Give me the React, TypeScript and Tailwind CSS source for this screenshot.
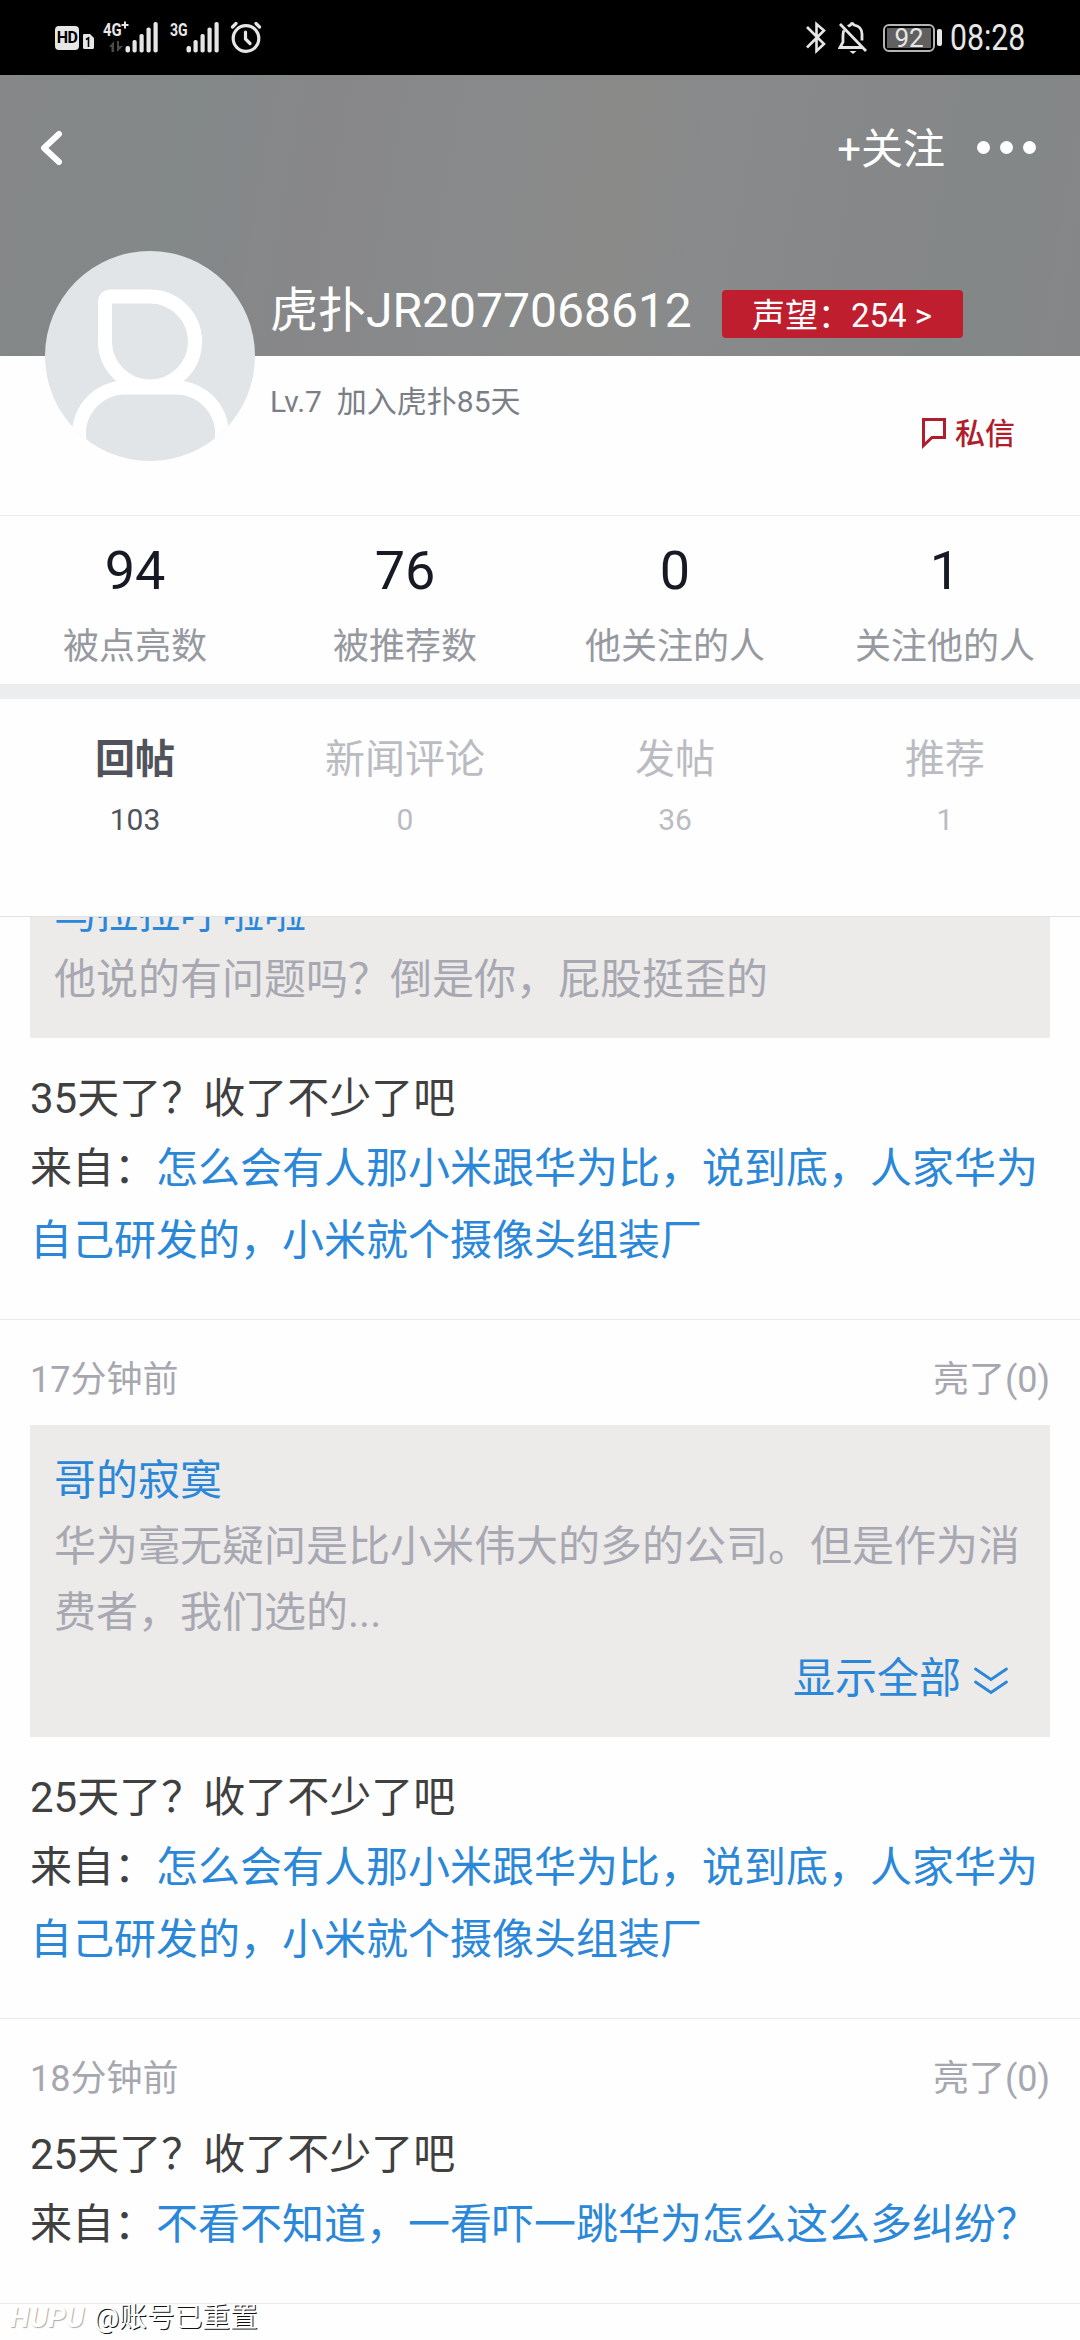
import React from 'react';

interface Reply {
  time?: string;
  likes?: string;
  quote?: { author: string; lines: string[]; expandable?: boolean };
  text: string;
  source: string[];
}

const stats = [
  { value: '94', label: '被点亮数' },
  { value: '76', label: '被推荐数' },
  { value: '0', label: '他关注的人' },
  { value: '1', label: '关注他的人' },
];

const tabs = [
  { name: '回帖', count: '103', active: true },
  { name: '新闻评论', count: '0' },
  { name: '发帖', count: '36' },
  { name: '推荐', count: '1' },
];

const replies: Reply[] = [
  {
    quote: { author: '乌拉拉呼啦啦', lines: ['他说的有问题吗？倒是你，屁股挺歪的'] },
    text: '35天了？收了不少了吧',
    source: ['怎么会有人那小米跟华为比，说到底，人家华为', '自己研发的，小米就个摄像头组装厂'],
  },
  {
    time: '17分钟前',
    likes: '亮了(0)',
    quote: {
      author: '哥的寂寞',
      lines: ['华为毫无疑问是比小米伟大的多的公司。但是作为消', '费者，我们选的...'],
      expandable: true,
    },
    text: '25天了？收了不少了吧',
    source: ['怎么会有人那小米跟华为比，说到底，人家华为', '自己研发的，小米就个摄像头组装厂'],
  },
  {
    time: '18分钟前',
    likes: '亮了(0)',
    text: '25天了？收了不少了吧',
    source: ['不看不知道，一看吓一跳华为怎么这么多纠纷？'],
  },
];

const Signal = () => (
  <svg width="34" height="34" viewBox="0 0 34 34" fill="#e6e6e6">
    <rect x="0.5" y="25" width="4.5" height="6.5" rx="2" />
    <rect x="7.5" y="19" width="4.2" height="12.5" rx="1.8" />
    <rect x="14.5" y="13" width="4.2" height="18.5" rx="1.8" />
    <rect x="21.5" y="6.5" width="4.2" height="25" rx="1.8" />
    <rect x="28.5" y="1" width="4.2" height="30.5" rx="1.8" />
  </svg>
);

const StatusBar = () => (
  <div className="flex h-[75px] items-start bg-black text-[#e6e6e6]">
    <div className="ml-[55px] mt-[26px] flex h-6 w-6 items-center justify-center rounded-[4px] bg-[#e6e6e6] text-[16px] font-bold leading-6 tracking-[-0.5px] text-black">HD</div>
    <svg className="ml-1 mt-[34px]" width="11" height="15" viewBox="0 0 11 15">
      <path d="M1 0h6l4 4v9.500q0 1.500-1.500 1.500h-8q-1.500 0-1.500-1.500v-12.500q0-1 1-1z" fill="#e6e6e6" />
      <path d="M3 5.500l2.500-1.500v9" fill="none" stroke="#000" strokeWidth="1.600" />
    </svg>
    <div className="relative ml-[9px] mt-[21px] h-9 w-[22px]">
      <span className="absolute left-0 top-0 origin-left scale-x-[0.78] text-[19px] font-bold leading-[18px]">4G</span>
      <svg className="absolute left-[18px] top-0" width="8" height="8" viewBox="0 0 8 8" fill="none" stroke="#e6e6e6" strokeWidth="2">
        <path d="M4 0.500v7M0.500 4h7" />
      </svg>
      <svg className="absolute left-[6px] top-[20px]" width="14" height="12" viewBox="0 0 14 12" fill="#4a4a4a">
        <path d="M5 0v11H2.500V6H0zM8 0h2v5h4l-6 6z" />
      </svg>
    </div>
    <div className="mt-[21px]"><Signal /></div>
    <span className="ml-[11px] mt-[21px] w-[17px] origin-left scale-x-[0.74] text-[19px] font-bold leading-[18px]">3G</span>
    <div className="-ml-px mt-[21px]"><Signal /></div>
    <svg className="ml-[10px] mt-[21px]" width="32" height="33" viewBox="0 0 32 33" fill="none" stroke="#e6e6e6" strokeWidth="3.200" strokeLinecap="round">
      <circle cx="16" cy="17.500" r="12.800" />
      <path d="M15.500 11v7l4.500 4.500M2.500 6l3.500-3.500M29.500 6L26 2.500" />
    </svg>
    <svg className="ml-auto mt-[21px]" width="20" height="33" viewBox="0 0 20 33" fill="none" stroke="#e6e6e6" strokeWidth="2.600">
      <path d="M1 6l17 17-7.500 7V3L18 9.500 1 26.500" />
    </svg>
    <svg className="ml-3 mt-[21px]" width="30" height="33" viewBox="0 0 30 33" fill="none" stroke="#e6e6e6" strokeWidth="2.800">
      <path d="M2 3l26 27M6 9.500C4.500 12 5 16 5 21l-3 5.500h22M10 5.500C11 4.500 12 4.500 12.500 4q1.500-3 3.500 0c5 1 8 4 8 9v6.500" />
      <path d="M11.500 30h7l-3.500 3z" fill="#e6e6e6" stroke="none" />
    </svg>
    <div className="ml-[15px] mt-6 flex h-7 w-[52px] items-center justify-center rounded-[6px] border-2 border-[#b5b5b5] bg-black p-[2px]">
      <span className="flex h-full w-full items-center justify-center bg-[#606060] text-[26px] leading-5 text-[#e6e6e6]">92</span>
    </div>
    <div className="ml-[2px] mt-[29px] h-[17px] w-[5px] rounded-[2px] bg-[#e6e6e6]" />
    <span className="ml-2 mr-[54px] mt-[20px] w-[76px] origin-left scale-x-[0.84] whitespace-nowrap text-[36px] leading-9">08:28</span>
  </div>
);

const Avatar = () => (
  <svg className="absolute left-[45px] top-[176px]" width="210" height="210" viewBox="0 0 210 210">
    <defs>
      <clipPath id="face"><circle cx="105" cy="105" r="105" /></clipPath>
    </defs>
    <circle cx="105" cy="105" r="105" fill="#e1e5e8" />
    <g clipPath="url(#face)" fill="none" stroke="#fff" strokeWidth="14">
      <path d="M66 45.500h39.500a45 45 0 1 1-45.500 45V51.500q0-6 6-6z" />
      <path d="M34.500 200v-10a46.500 46.500 0 0 1 46.500-53.500h49a46.500 46.500 0 0 1 46.500 53.500v10" />
    </g>
  </svg>
);

const Header = () => (
  <div className="relative h-[440px]">
    <div className="flex h-[281px] flex-col bg-[linear-gradient(100deg,#858788_0%,#838889_18%,#878789_30%,#888a8b_45%,#8a8a88_56%,#888a8b_64%,#868788_78%,#838788_90%,#858687_100%)] text-white">
      <div className="flex h-[145px] items-center">
        <svg className="ml-[39px]" width="24" height="36" viewBox="0 0 24 36" fill="none" stroke="#fff" strokeWidth="6" strokeLinecap="round" strokeLinejoin="round">
          <path d="M20 4L5 18l15 14" />
        </svg>
        <span className="ml-auto mt-[4px] text-[42px] leading-[60px]">+关注</span>
        <div className="ml-[32px] mr-[44px] flex gap-[10px]">
          <i className="h-[13px] w-[13px] rounded-full bg-white" />
          <i className="h-[13px] w-[13px] rounded-full bg-white" />
          <i className="h-[13px] w-[13px] rounded-full bg-white" />
        </div>
      </div>
      <div className="ml-[270px] mt-[61px] flex items-start">
        <span className="w-[452px] text-[48px] leading-[60px]">虎扑JR2077068612</span>
        <span className="mt-[9px] h-12 w-[241px] rounded-[4px] bg-[#bf1e2e] pl-[30px] text-[33px] leading-[52px] whitespace-nowrap">声望：254 &gt;</span>
      </div>
    </div>
    <Avatar />
    <div className="ml-[270px] flex pt-[25px]">
      <span className="whitespace-pre text-[30px] leading-[42px] text-[#7b7e87]">Lv.7  加入虎扑85天</span>
      <div className="ml-auto mr-[65px] mt-[32px] flex h-[42px] items-center text-[#b01e2d]">
        <svg className="mr-[8px]" width="26" height="32" viewBox="0 0 26 32" fill="none" stroke="#b01e2d" strokeWidth="3">
          <path d="M2.500 1.500h21v18H11L2.500 27.500z" />
        </svg>
        <span className="text-[30px] font-medium leading-[42px]">私信</span>
      </div>
    </div>
  </div>
);

const ReplyItem: React.FC<{ reply: Reply; clipped?: boolean }> = ({ reply, clipped }) => (
  <div className={`border-b border-[#e9e9eb] px-[30px] ${clipped ? '-mt-[79px]' : ''}`}>
    {reply.time && (
      <div className="flex justify-between pt-[35px] text-[36px] leading-[50px] text-[#a6a7b0]">
        <span>{reply.time}</span>
        <span>{reply.likes}</span>
      </div>
    )}
    {reply.quote ? (
      <div className="mb-[27px] mt-[20px] bg-[#ecebea] px-[24px] pb-[25px] pt-[23px] text-[42px] leading-[66px] text-[#a8a8b2]">
        <p className="text-[#2b87d8]">{reply.quote.author}</p>
        {reply.quote.lines.map((line) => <p key={line} className="whitespace-nowrap">{line}</p>)}
        {reply.quote.expandable && (
          <div className="flex items-center justify-end pr-[17px] text-[#2b87d8]">
            显示全部
            <svg className="ml-[12px] mt-[4px]" width="36" height="30" viewBox="0 0 36 30" fill="none" stroke="#2b87d8" strokeWidth="2.800" strokeLinecap="round">
              <path d="M2.500 3L18 13.500 33.500 3M2.500 16L18 26.500 33.500 16" />
            </svg>
          </div>
        )}
      </div>
    ) : <div className="h-[17px]" />}
    <div className="pb-[42px] text-[42px] leading-[72px] text-[#404040]">
      <p className="leading-[68px]">{reply.text}</p>
      {reply.source.map((line, i) => (
        <p key={line} className="whitespace-nowrap text-[#2b87d8]">
          {i === 0 && <span className="text-[#404040]">来自：</span>}
          {line}
        </p>
      ))}
    </div>
  </div>
);

export default function App() {
  return (
    <div className="relative h-[2340px] w-[1080px] overflow-hidden bg-[#fefefe] font-[Roboto,'Noto_Sans_CJK_SC',sans-serif]">
      <StatusBar />
      <Header />
      <div className="grid h-[169px] grid-cols-4 border-t border-[#eaeaec] text-center">
        {stats.map((s) => (
          <div key={s.label} className="pt-[25px]">
            <div className="text-[54px] leading-[60px] text-[#171a24]">{s.value}</div>
            <div className="mt-[21px] text-[36px] leading-[50px] text-[#96999f]">{s.label}</div>
          </div>
        ))}
      </div>
      <div className="h-[15px] bg-[#ebedef]" />
      <div className="grid h-[218px] grid-cols-4 border-b border-[#e2e2e4] text-center">
        {tabs.map((t) => (
          <div key={t.name} className={`pt-[36px] ${t.active ? 'text-[#50535b]' : 'text-[#babcc1]'}`}>
            <div className={`text-[40px] leading-[50px] ${t.active ? 'font-bold' : ''}`}>{t.name}</div>
            <div className="mt-[15px] text-[30px] leading-[40px]">{t.count}</div>
          </div>
        ))}
      </div>
      <div className="overflow-hidden">
        {replies.map((r, i) => <ReplyItem key={i} reply={r} clipped={i === 0} />)}
      </div>
      <div className="absolute bottom-[4px] left-[10px] flex items-center text-white">
        <span className="w-[84px] text-[28px] font-bold italic leading-9 tracking-[0.5px] [text-shadow:1px_1px_1px_#aaa]">HUPU</span>
        <span className="text-[28px] leading-9 tracking-[-0.3px] [text-shadow:1px_1px_0_#111]">@账号已重置</span>
      </div>
    </div>
  );
}
